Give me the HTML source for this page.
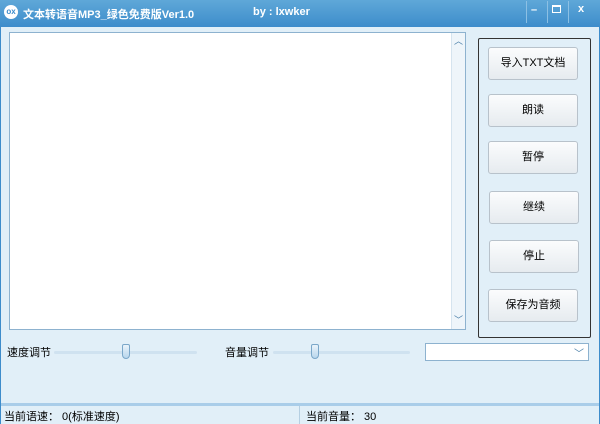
<!DOCTYPE html>
<html><head><meta charset="utf-8"><style>
*{margin:0;padding:0;box-sizing:border-box}
body{width:600px;height:424px;overflow:hidden;background:#e1eff8;font-family:"Liberation Sans","Noto Sans CJK SC",sans-serif;font-size:11px;color:#000;position:relative}
.title{position:absolute;left:0;top:0;width:600px;height:27px;background:linear-gradient(#5fa8d8,#3d8ccb);color:#fff;font-weight:bold;font-size:11px}
.title span{position:absolute;top:6px}
.win{position:absolute;left:0;top:27px;width:600px;height:397px;border-left:1px solid #3d8ccb;border-right:1px solid #3d8ccb}
.ta{position:absolute;left:9px;top:32px;width:457px;height:298px;background:#fff;border:1px solid #8db2cf}
.sb{position:absolute;right:0;top:0;width:14px;height:296px;background:#eef5fa;border-left:1px solid #d5e4ef}
.sb i{position:absolute;left:2px;font-style:normal;font-size:9px;color:#4a7fa8}
.panel{position:absolute;left:478px;top:38px;width:113px;height:300px;border:1px solid #333;border-radius:2px}
.btn{position:absolute;width:90px;height:33px;background:linear-gradient(#fbfcfd,#e6ebef);border:1px solid #b8c2cb;border-radius:3px;text-align:center;line-height:31px;font-size:11px}
.lbl{position:absolute;top:344px}
.track{position:absolute;top:351px;height:3px;background:#cfe2f0;border-radius:2px}
.thumb{position:absolute;top:344px;width:8px;height:15px;background:linear-gradient(#e9f3fb,#b8d6ec);border:1px solid #7aa7c9;border-radius:2px 2px 4px 4px}
.combo{position:absolute;left:425px;top:343px;width:164px;height:18px;background:#fff;border:1px solid #8db2cf}
.status{position:absolute;left:1px;top:403px;width:598px;height:21px;background:#e1eff8;border-top:3px solid #a9cde9}
.status span{position:absolute;top:2px;font-size:11px}
</style></head><body>
<div class="title">
<span style="left:4px;top:5px;width:14px;height:14px;border-radius:50%;background:#fff;color:#3d8ccb;font-size:8px;line-height:14px;text-align:center">ox</span>
<span style="left:23px">文本转语音MP3_绿色免费版Ver1.0</span>
<span style="left:253px">by : lxwker</span>
<span style="left:526px;top:1px;width:1px;height:22px;background:#8cc0e4"></span>
<span style="left:531px;top:4px">–</span>
<span style="left:547px;top:1px;width:1px;height:22px;background:#8cc0e4"></span>
<span style="left:552px;top:5px;width:9px;height:8px;border:1px solid #fff;border-top-width:2px"></span>
<span style="left:568px;top:1px;width:1px;height:22px;background:#8cc0e4"></span>
<span style="left:578px;top:3px">x</span>
</div>
<div class="win"></div>
<div class="ta"><div class="sb"><i style="top:1px">︿</i><i style="bottom:3px">﹀</i></div></div>
<div class="panel"></div>
<div class="btn" style="left:488px;top:47px">导入TXT文档</div>
<div class="btn" style="left:488px;top:94px">朗读</div>
<div class="btn" style="left:488px;top:141px">暂停</div>
<div class="btn" style="left:489px;top:191px">继续</div>
<div class="btn" style="left:489px;top:240px">停止</div>
<div class="btn" style="left:488px;top:289px">保存为音频</div>
<span class="lbl" style="left:7px">速度调节</span>
<div class="track" style="left:54px;width:143px"></div>
<div class="thumb" style="left:122px"></div>
<span class="lbl" style="left:225px">音量调节</span>
<div class="track" style="left:273px;width:137px"></div>
<div class="thumb" style="left:311px"></div>
<div class="combo"><span style="position:absolute;right:4px;top:1px;font-size:10px;color:#4a7fa8">﹀</span></div>
<div class="status">
<span style="left:3px">当前语速： 0(标准速度)</span>
<span style="left:298px;top:0;width:1px;height:18px;background:#b5cfe2"></span>
<span style="left:305px">当前音量： 30</span>
</div>
</body></html>
